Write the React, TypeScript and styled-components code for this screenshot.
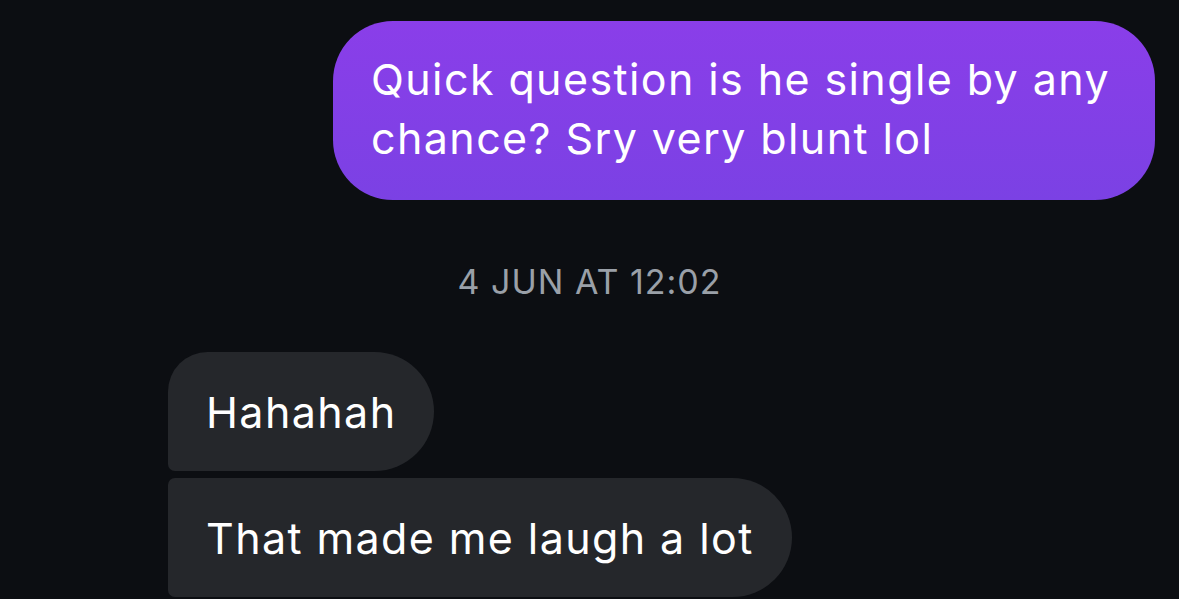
import React from 'react';
import styled, { createGlobalStyle } from 'styled-components';

const GlobalStyle = createGlobalStyle`
  html, body {
    margin: 0;
    padding: 0;
    background: #0c0e12;
    overflow: hidden;
  }
  body {
    font-family: Inter, "Noto Sans", "Liberation Sans", sans-serif;
    -webkit-font-smoothing: antialiased;
  }
`;

const Thread = styled.div`
  width: 1179px;
  height: 599px;
  display: flex;
  flex-direction: column;
  padding: 21px 24px 0 168px;
  box-sizing: border-box;
  overflow: hidden;
`;

const Row = styled.div<{ $mine?: boolean }>`
  display: flex;
  justify-content: ${({ $mine }) => ($mine ? 'flex-end' : 'flex-start')};
  margin-bottom: 7px;
`;

const SentBubble = styled.div`
  width: 822px;
  box-sizing: border-box;
  padding: 29px 38px 32px;
  background: linear-gradient(180deg, #8a3ee9 0%, #7b41e4 100%);
  color: #ffffff;
  font-size: 43px;
  letter-spacing: 1.4px;
  line-height: 59px;
  border-radius: 60px;
`;

const Stamp = styled.div`
  margin: 55px 0 50px -144px;
  text-align: center;
  color: #9aa0a8;
  font-size: 34px;
  line-height: 40px;
  letter-spacing: 1px;
`;

const ReceivedBubble = styled.div<{ $first?: boolean }>`
  box-sizing: border-box;
  height: 119px;
  padding: 0 38px;
  display: flex;
  align-items: center;
  background: #25272b;
  color: #ffffff;
  font-size: 43px;
  letter-spacing: 1.4px;
  border-radius: ${({ $first }) => ($first ? '40px 60px 60px 7px' : '7px 60px 60px 7px')};
`;

const App: React.FC = () => {
  return (
    <>
      <GlobalStyle />
      <Thread>
        <Row $mine>
          <SentBubble>
            Quick question is he single by any
            <br />
            chance? Sry very blunt lol
          </SentBubble>
        </Row>
        <Stamp>4 JUN AT 12:02</Stamp>
        <Row>
          <ReceivedBubble $first>Hahahah</ReceivedBubble>
        </Row>
        <Row>
          <ReceivedBubble>That made me laugh a lot</ReceivedBubble>
        </Row>
      </Thread>
    </>
  );
};

export default App;
